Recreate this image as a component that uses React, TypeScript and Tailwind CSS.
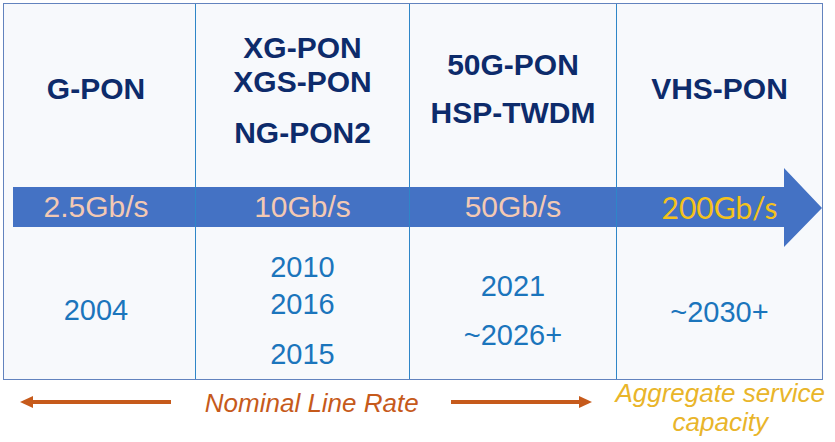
const head = 'font-["Liberation_Sans",Arial,sans-serif] font-bold text-[30px] leading-[34px] text-[#0d2b6b] text-center'
const year = 'font-["Liberation_Sans",Arial,sans-serif] text-[29px] leading-[34px] text-[#1b75bc] text-center'
const rate = 'font-["Liberation_Sans",Arial,sans-serif] text-[30px] leading-[40px] text-[#f3c9b3] text-center'

function Cell({ first, children, className }: { first?: boolean; children: React.ReactNode; className?: string }) {
  return (
    <div className={`relative z-10 flex flex-col ${first ? 'pr-[7px]' : 'border-l border-[#2e86c8]'} ${className ?? ''}`}>
      {children}
    </div>
  )
}

function LineArrow({ dir }: { dir: 'left' | 'right' }) {
  const w = dir === 'left' ? 151 : 141
  return (
    <svg width={w} height={14} viewBox={`0 0 ${w} 14`} className="mt-[15px] shrink-0">
      {dir === 'left' ? (
        <>
          <line x1={10} y1={7} x2={w} y2={7} stroke="#c65a1b" strokeWidth={4} />
          <polygon points="0,7 13,1 13,13" fill="#c65a1b" />
        </>
      ) : (
        <>
          <line x1={0} y1={7} x2={w - 10} y2={7} stroke="#c65a1b" strokeWidth={4} />
          <polygon points={`${w},7 ${w - 13},1 ${w - 13},13`} fill="#c65a1b" />
        </>
      )}
    </svg>
  )
}

export default function App() {
  return (
    <div className="w-[835px] h-[442px] bg-white overflow-hidden pt-[3px] pl-[3px]">
      <div className="relative w-[820px] h-[377px] border border-[#6283be] bg-[#f7f9fc] grid grid-cols-[191px_214px_207px_206px] grid-rows-[183px_40px_152px]">
        <svg
          className="absolute left-[9px] top-[164px] z-0 overflow-visible"
          width={809}
          height={79}
          viewBox="0 0 809 79"
        >
          <polygon points="0,19 771,19 771,0 809,40 771,79 771,59 0,59" fill="#4472c4" />
        </svg>

        <Cell first className="pt-[68px]">
          <div className={head}>G-PON</div>
        </Cell>
        <Cell className="pt-[27px]">
          <div className={head}>XG-PON</div>
          <div className={head}>XGS-PON</div>
          <div className={`${head} mt-[17px]`}>NG-PON2</div>
        </Cell>
        <Cell className="pt-[44px]">
          <div className={head}>50G-PON</div>
          <div className={`${head} mt-[14px]`}>HSP-TWDM</div>
        </Cell>
        <Cell className="pt-[68px]">
          <div className={head}>VHS-PON</div>
        </Cell>

        <Cell first>
          <div className={rate}>2.5Gb/s</div>
        </Cell>
        <Cell>
          <div className={rate}>10Gb/s</div>
        </Cell>
        <Cell>
          <div className={rate}>50Gb/s</div>
        </Cell>
        <Cell>
          <div className='font-["Lato",sans-serif] text-[30px] leading-[40px] text-[#f5c21b] text-center'>200Gb/s</div>
        </Cell>

        <Cell first className="pt-[66px]">
          <div className={year}>2004</div>
        </Cell>
        <Cell className="pt-[23px]">
          <div className={year}>2010</div>
          <div className={`${year} mt-[3px]`}>2016</div>
          <div className={`${year} mt-[16px]`}>2015</div>
        </Cell>
        <Cell className="pt-[42px]">
          <div className={year}>2021</div>
          <div className={`${year} mt-[15px]`}>~2026+</div>
        </Cell>
        <Cell className="pt-[68px]">
          <div className={year}>~2030+</div>
        </Cell>
      </div>

      <div className="flex items-start h-[62px] -ml-[3px] pl-[20px]">
        <LineArrow dir="left" />
        <div className='ml-[16px] w-[250px] pt-[8px] text-center italic text-[26px] leading-[30px] text-[#c65a1b] font-["Liberation_Sans",Arial,sans-serif]'>
          Nominal Line Rate
        </div>
        <div className="ml-[15px]">
          <LineArrow dir="right" />
        </div>
        <div className='ml-[13px] -mt-[1px] w-[230px] text-center italic text-[26px] leading-[29px] text-[#e9b52a] font-["Liberation_Sans",Arial,sans-serif]'>
          <div>Aggregate service</div>
          <div>capacity</div>
        </div>
      </div>
    </div>
  )
}
